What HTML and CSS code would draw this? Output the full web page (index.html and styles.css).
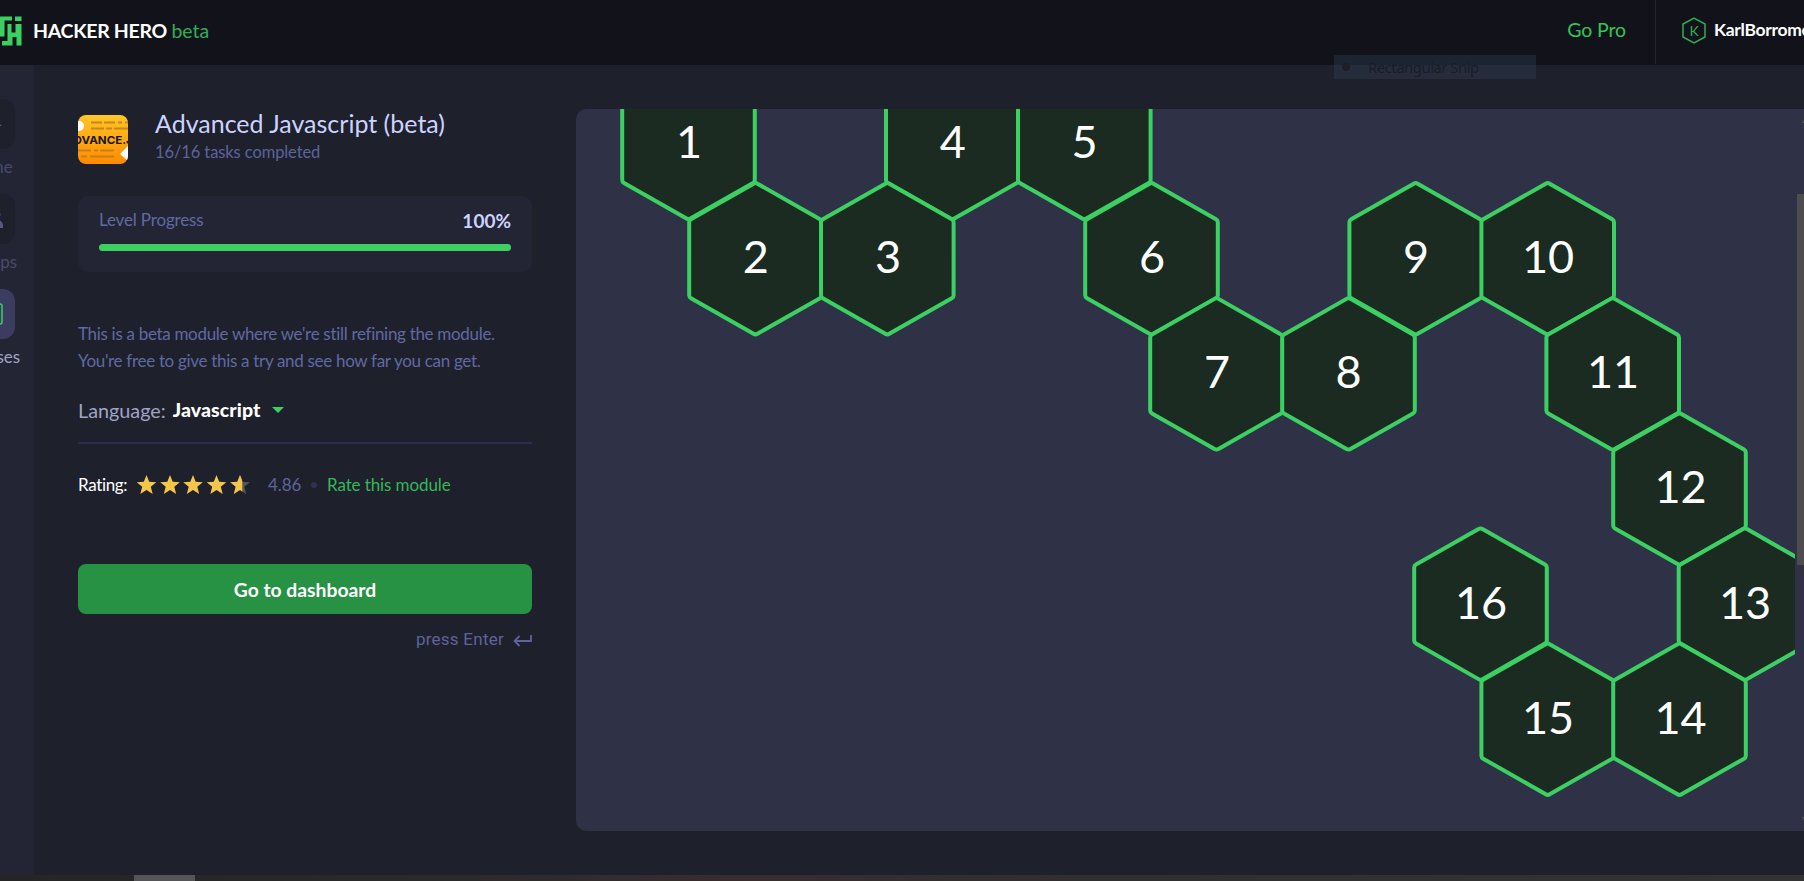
FILE: index.html
```html
<!DOCTYPE html>
<html lang="en">
<head>
<meta charset="utf-8">
<title>Hacker Hero</title>
<link rel="stylesheet" href="styles.css">
</head>
<body>
<header class="topbar">
  <svg class="logo" width="22" height="32" viewBox="0 0 22 32"><path fill="#3cd063" d="M0 1.500h12v4H4.500v16H0zM15 1.500h6.500v4.500H15zM7.500 9h4v8.500h4V9h6v21.500h-5V22h-4v8.500H2V26h5.500z"/></svg>
  <div class="brand">HACKER HERO <span>beta</span></div>
  <a class="gopro">Go Pro</a>
  <div class="user">
    <svg width="24" height="27" viewBox="0 0 24 27"><path d="M12 1.200 23 7v13L12 25.800 1 20V7z" fill="none" stroke="#2fae55" stroke-width="1.500"/><text class="user-k" x="12" y="18.500" text-anchor="middle">K</text></svg>
    <span>KarlBorromeo</span>
  </div>
</header>
<div class="snip"><i></i><span>Rectangular Snip</span></div>
<div class="body">
  <nav class="side">
    <div class="side-item"><div class="tile"><svg width="24" height="24" viewBox="0 0 24 24"><path d="M0 14 12 3l12 11h-4L12 7z" fill="#555883"/></svg></div><span>Home</span></div>
    <div class="side-item"><div class="tile"><svg width="28" height="24" viewBox="0 0 28 24"><path d="M1 22v-3q0-6 6-6t6 6v3zM17 21v-3q0-3-2-5 11-2 12 5v3zM20 3a4.500 4.500 0 0 1 0 9z" fill="#555883"/></svg></div><span>Groups</span></div>
    <div class="side-item on"><div class="tile"><svg width="26" height="24" viewBox="0 0 26 24"><rect x="1" y="2" width="24" height="20" rx="2" fill="none" stroke="#3cd063" stroke-width="1.500"/></svg></div><span>Courses</span></div>
  </nav>
  <main class="panel">
    <div class="head">
      <svg class="badge" width="50" height="49" viewBox="0 0 50 49"><defs><linearGradient id="g" x2="0" y2="1"><stop offset="0" stop-color="#ffc727"/><stop offset="1" stop-color="#ff8a00"/></linearGradient></defs><rect width="50" height="49" fill="url(#g)"/><path d="M13 7.500h11m2 0h11m3 0h4m3 0h3M13 13.500h13m2 0h6m2 0h14M0 35.500h13m3 0h4m2 0h14M3 41.500h6m3 0h24" stroke="#b97a1c" stroke-width="1.800" opacity=".8"/><circle cx="1" cy="11" r="5" fill="#fff"/><path d="m42 39 8-8v15z" fill="#fff"/><text class="badge-t" x="-4.500" y="28.500" textLength="67" lengthAdjust="spacingAndGlyphs">DVANCE.JS</text></svg>
      <div><h1>Advanced Javascript (beta)</h1><p>16/16 tasks completed</p></div>
    </div>
    <section class="progress">
      <div class="prow"><span>Level Progress</span><b>100%</b></div>
      <div class="bar"></div>
    </section>
    <p class="desc">This is a beta module where we're still refining the module.<br>You're free to give this a try and see how far you can get.</p>
    <div class="lang"><span>Language:</span><b>Javascript</b><svg width="12" height="6" viewBox="0 0 12 6"><path d="M0 0h12L6 6z" fill="#3cd063"/></svg></div>
    <div class="rating"><span class="rl">Rating:</span>
      <svg width="113" height="20" viewBox="0 0 113 20"><defs><path id="s" d="m9.500 0 2.700 6.800 7.100.4-5.500 4.600 1.900 7.200-6.200-4-6.200 4 1.900-7.200L-.3 7.200l7.100-.4z"/><clipPath id="h"><path d="M-1-1H11.800V21H-1z"/></clipPath></defs><g fill="#f4c649"><use href="#s"/><use href="#s" x="23.500"/><use href="#s" x="46.500"/><use href="#s" x="70"/></g><g transform="translate(93.500)"><use href="#s" fill="#55555a"/><use href="#s" fill="#f4c649" clip-path="url(#h)"/></g></svg>
      <span class="score">4.86</span><i></i><a>Rate this module</a></div>
    <button class="go">Go to dashboard</button>
    <div class="enter">press Enter <svg width="19" height="12" viewBox="0 0 19 12"><path d="M18 0v6H1.500M6.500 1 1.500 6l5 5" fill="none" stroke="#5d639b" stroke-width="1.800"/></svg></div>
  </main>
  <section class="map">
    <svg class="hexes" width="1219" height="722" viewBox="576 109 1219 722">
      <defs><path id="x" d="M-2-75Q0-76.300 2-75L64.500-39.500Q66.300-38.500 66.300-36.500V36.500Q66.300 38.500 64.500 39.500L2 75Q0 76.300-2 75L-64.500 39.500Q-66.300 38.500-66.300 36.500V-36.500Q-66.300-38.500-64.500-39.500Z"/></defs>
      <g class="hex"><use href="#x" x="688.500" y="143.500"/><use href="#x" x="952.300" y="143.500"/><use href="#x" x="1084.300" y="143.500"/><use href="#x" x="755.500" y="258.700"/><use href="#x" x="887.300" y="258.700"/><use href="#x" x="1151.500" y="258.700"/><use href="#x" x="1415.700" y="258.700"/><use href="#x" x="1547.700" y="258.700"/><use href="#x" x="1216.500" y="373.900"/><use href="#x" x="1348.500" y="373.900"/><use href="#x" x="1612.700" y="373.900"/><use href="#x" x="1679.500" y="489"/><use href="#x" x="1745" y="604.100"/><use href="#x" x="1480.500" y="604.100"/><use href="#x" x="1547.700" y="719.200"/><use href="#x" x="1679.500" y="719.200"/></g>
      <g class="num"><text x="689" y="158">1</text><text x="952.800" y="158">4</text><text x="1084.500" y="158">5</text><text x="755.800" y="273">2</text><text x="888" y="273">3</text><text x="1152" y="273">6</text><text x="1416" y="273">9</text><text x="1548" y="273">10</text><text x="1217" y="388">7</text><text x="1348.500" y="388">8</text><text x="1613" y="388">11</text><text x="1680.500" y="503">12</text><text x="1745" y="619">13</text><text x="1481" y="619">16</text><text x="1548" y="734">15</text><text x="1680.500" y="734">14</text></g>
    </svg>
    <div class="scroll"><i class="up"></i><i class="thumb"></i><i class="down"></i></div>
  </section>
</div>
<footer class="taskbar"><i></i></footer>
</body>
</html>
```
FILE: styles.css
```css
* { box-sizing: border-box; }
body { margin: 0; width: 1804px; height: 881px; overflow: hidden; background: #1e202c; font-family: Lato, sans-serif; color: #fff; display: flex; flex-direction: column; position: relative; }
h1, p { margin: 0; font-weight: 400; }
svg { display: block; flex: none; }

.topbar { height: 65px; flex: none; background: #12131a; display: flex; align-items: center; }
.logo { margin-top: -4px; }
.brand { margin-left: 11px; margin-top: -4px; font-size: 19.500px; font-weight: 700; letter-spacing: -.3px; white-space: nowrap; }
.brand span { color: #2fae55; font-weight: 400; letter-spacing: 0; }
.gopro { margin-left: auto; margin-top: -6px; font-size: 19.500px; letter-spacing: -.1px; color: #32c558; }
.user { width: 149px; height: 64px; margin: 0 0 1px 29px; padding: 0 0 4px 26px; border-left: 1px solid #24252f; display: flex; align-items: center; gap: 8px; font-size: 17.500px; font-weight: 700; letter-spacing: -.3px; overflow: hidden; }
.user span { margin-top: -2px; }
.user-k { font-size: 14px; font-weight: 400; fill: #2fae55; }

.snip { position: absolute; left: 1334px; top: 55px; width: 202px; height: 24px; background: rgba(56, 77, 102, .3); display: flex; align-items: center; color: #1b1c27; font: 15px "Noto Sans", sans-serif; letter-spacing: -.55px; white-space: nowrap; }
.snip i { width: 8px; height: 8px; margin: 0 18px 0 8px; border-radius: 50%; background: #1d1e27; }

.body { flex: 1; display: flex; min-height: 0; }
.side { width: 34px; flex: none; background: #242534; padding-top: 34px; overflow: hidden; display: flex; flex-direction: column; gap: 12px; align-items: flex-end; }
.side-item { width: 60px; height: 83px; display: flex; flex-direction: column; align-items: center; gap: 7px; color: #484b6d; font-size: 17px; margin-right: 14px; }
.tile { width: 50px; height: 50px; border-radius: 12px; background: #1e202c; display: grid; place-items: center; }
.on { color: #a0a3c4; }
.on .tile { background: #3b3c60; }

.panel { width: 454px; margin-left: 44px; flex: none; padding-top: 43px; }
.head { display: flex; gap: 27px; height: 88px; }
.badge { margin-top: 7px; border-radius: 8px; }
.badge-t { font: 700 11px Inter, sans-serif; fill: #15161c; }
.head h1 { font-size: 25px; line-height: 30px; color: #ccd3ff; white-space: nowrap; }
.head p { font-size: 16.500px; letter-spacing: -.1px; line-height: 24px; margin-top: 2px; color: #5d639b; }
.progress { height: 76px; background: #242534; border-radius: 10px; padding: 13px 21px; }
.prow { display: flex; justify-content: space-between; font-size: 17px; letter-spacing: -.15px; line-height: 21px; color: #6169a3; }
.prow b { color: #ccd3ff; font-size: 19px; line-height: 24px; letter-spacing: 0; }
.bar { height: 7px; margin-top: 11px; border-radius: 4px; background: #3cd063; }
.desc { margin-top: 48px; font-size: 17px; letter-spacing: -.31px; line-height: 27px; color: #6169a3; white-space: nowrap; }
.lang { height: 70px; padding-top: 3px; border-bottom: 2px solid #2b2d52; display: flex; align-items: center; font-size: 19.800px; color: #a0a3c4; }
.lang b { color: #fff; font-size: 19.500px; font-weight: 900; letter-spacing: .1px; margin: 0 12px 0 7px; }
.rating { display: flex; align-items: center; height: 20px; margin-top: 31px; font-size: 17px; letter-spacing: -.1px; white-space: nowrap; }
.rl { width: 59px; letter-spacing: -.35px; }
.rl, .score, .rating a { margin-top: -2px; }
.score { color: #5d639b; margin-left: 18px; width: 34px; }
.rating i { width: 6px; height: 6px; border-radius: 50%; background: #2f3150; margin: 0 10px 0 9px; }
.rating a { color: #32b957; }
.go { display: block; width: 454px; height: 50px; margin-top: 69px; border: 0; border-radius: 8px; background: #289244; color: #fff; font: 700 19.300px Lato, sans-serif; }
.enter { display: flex; justify-content: flex-end; align-items: center; gap: 9px; height: 24px; margin-top: 13px; color: #5d639b; font: 17px Roboto, sans-serif; letter-spacing: .25px; }
.enter svg { margin-top: 3px; }

.map { flex: 1; height: 722px; margin: 44px 0 0 44px; background: #2f3147; border-radius: 10px 0 0 10px; display: flex; overflow: hidden; }
.hexes { width: 1219px; margin-right: 2px; }
.hex { fill: #1b2b22; stroke: #3cd063; stroke-width: 4px; }
.num { fill: #fff; font-size: 45px; text-anchor: middle; }
.scroll { width: 7px; display: flex; flex-direction: column; align-items: flex-end; }
.thumb { width: 7px; height: 371px; background: #4d4d4d; margin-top: 71px; }
.up { border-left: 3px solid transparent; border-bottom: 3px solid #4d4d4d; margin-top: 11px; }
.down { border-left: 3px solid transparent; border-top: 3px solid #4d4d4d; margin-top: 252px; }

.taskbar { flex: none; height: 6px; background: linear-gradient(90deg, #252525, #2a2a2a 25%, #382d2d 40%, #302f30 60%, #333); padding-left: 134px; }
.taskbar i { display: block; width: 61px; height: 6px; background: #555456; }
```
